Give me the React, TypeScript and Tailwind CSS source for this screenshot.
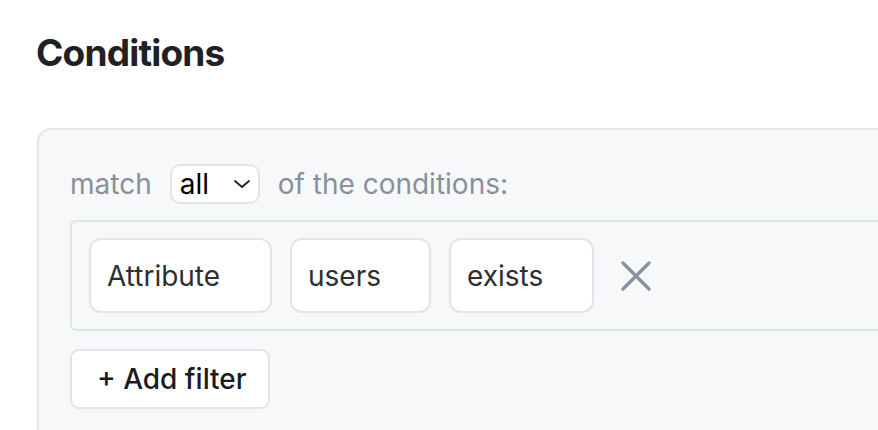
import React from 'react';

const fieldCls =
  'h-[75px] flex items-center rounded-[12px] border-2 border-[#e2e4e9] bg-white pl-[16px] text-[28px] text-[#2e2e30]';

export default function App() {
  return (
    <div className="h-[430px] w-[878px] overflow-hidden bg-white font-['Inter','Liberation_Sans',sans-serif]">
      <h1 className="pl-[36px] pt-[29px] text-[37px] font-bold leading-[48px] tracking-[-0.8px] text-[#212124]">Conditions</h1>

      {/* Conditions panel */}
      <div className="ml-[37px] mt-[51px] w-[1000px] rounded-[14px] border-2 border-[#e6e7ea] bg-[#f7f8fa] pl-[31px] pt-[33px] pb-[40px]">
        <div className="flex items-center gap-[18px] text-[28px] text-[#8a8f9b]">
          <span>match</span>
          <div className="flex h-[40px] w-[90px] items-center justify-between rounded-[10px] border-2 border-[#e2e4e8] bg-white pl-[8px] pr-[7px] text-[28px] text-black">
            <span>all</span>
            <svg width="18" height="10" viewBox="0 0 18 10" fill="none" stroke="#1f1f1f" strokeWidth="1.8" strokeLinecap="round" strokeLinejoin="round">
              <path d="M2 2l7 6 7-6" />
            </svg>
          </div>
          <span>of the conditions:</span>
        </div>

        {/* Filter row */}
        <div className="mt-[15px] flex items-center gap-[18px] rounded-[6px] border-2 border-[#dfe5e1] p-[16px] pl-[17px]">
          <div className={`${fieldCls} w-[183px]`}>Attribute</div>
          <div className={`${fieldCls} w-[141px]`}>users</div>
          <div className={`${fieldCls} w-[145px]`}>exists</div>
          <svg className="ml-[9px]" width="30" height="30" viewBox="0 0 30 30" fill="none" stroke="#8a909d" strokeWidth="3.2" strokeLinecap="round">
            <path d="M2 2l26 26M28 2L2 28" />
          </svg>
        </div>

        <button className="mt-[18px] flex h-[60px] w-[200px] items-center rounded-[9px] border-2 border-[#e2e4e9] bg-white pl-[25px] text-[28px] font-medium text-[#1b1b1f]">
          + Add filter
        </button>
      </div>
    </div>
  );
}
